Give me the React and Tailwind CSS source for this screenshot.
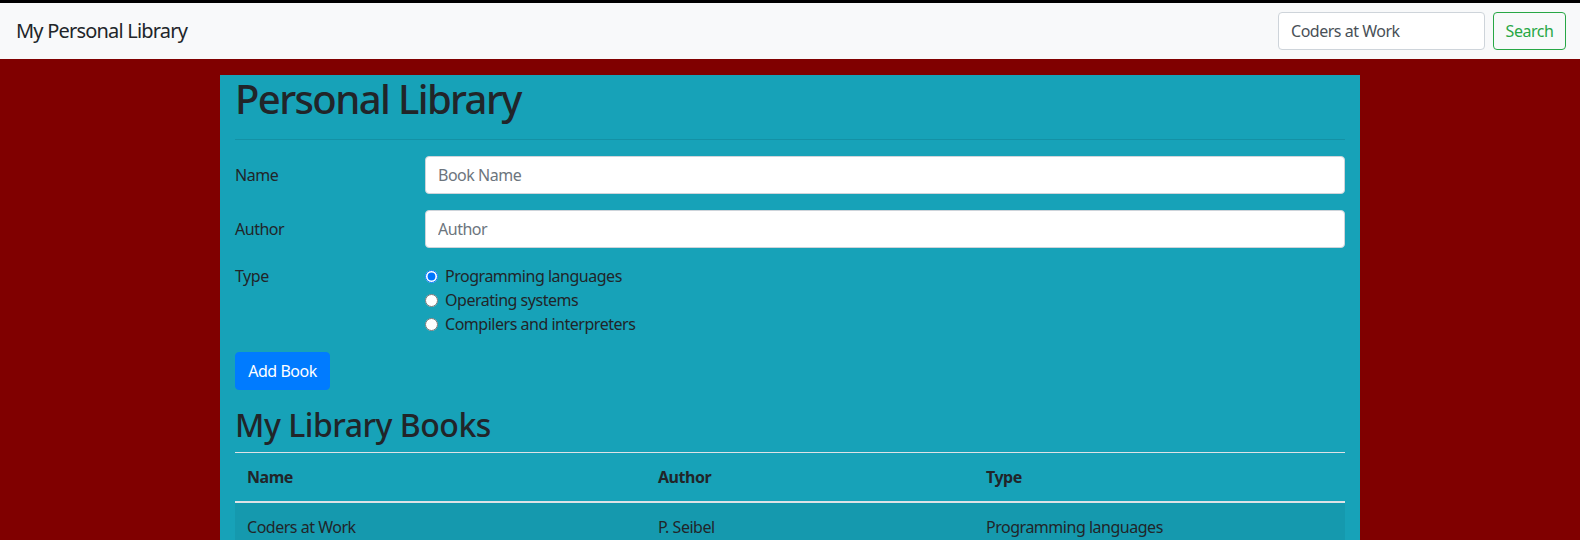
export default function App() {
  return (
    <div className="min-h-[540px] bg-[#800000] text-[#212529] font-['Noto_Sans',sans-serif] tracking-[-0.03em]">
      <div className="h-[3px] bg-black" />
      <nav className="h-[56px] bg-[#f8f9fa] flex items-center justify-between pl-4 pr-[14px]">
        <span className="text-[20px] leading-[30px] text-[#212529] tracking-[-0.04em]">My Personal Library</span>
        <div className="flex items-center gap-2">
          <input
            className="w-[207px] h-[38px] px-3 border border-[#ced4da] rounded bg-white text-[16px] text-[#495057] outline-none tracking-[-0.03em]"
            defaultValue="Coders at Work"
          />
          <button className="h-[38px] w-[73px] border border-[#28a745] rounded text-[#28a745] text-[16px]">
            Search
          </button>
        </div>
      </nav>
      <div className="w-[1140px] mx-auto mt-4 bg-[#17a2b8] px-[15px]">
        <h1 className="text-[40px] leading-[48px] font-medium tracking-[-0.04em]">Personal Library</h1>
        <div className="mt-4 mb-4 border-t border-black/10" />
        <div className="flex items-center mb-4">
          <label className="w-[190px] text-[16px] leading-6">Name</label>
          <input
            className="flex-1 h-[38px] px-3 bg-white border border-[#ced4da] rounded text-[16px] placeholder:text-[#6c757d] outline-none tracking-[-0.03em]"
            placeholder="Book Name"
          />
        </div>
        <div className="flex items-center mb-4">
          <label className="w-[190px] text-[16px] leading-6">Author</label>
          <input
            className="flex-1 h-[38px] px-3 bg-white border border-[#ced4da] rounded text-[16px] placeholder:text-[#6c757d] outline-none tracking-[-0.03em]"
            placeholder="Author"
          />
        </div>
        <div className="flex mb-4">
          <div className="w-[190px] text-[16px] leading-6">Type</div>
          <div className="flex flex-col">
            {["Programming languages", "Operating systems", "Compilers and interpreters"].map((t, i) => (
              <label key={t} className="flex items-center h-6 text-[16px]">
                <input type="radio" name="type" defaultChecked={i === 0} className="m-0 mr-[7px] w-[13px] h-[13px] mt-[1px]" />
                <span>{t}</span>
              </label>
            ))}
          </div>
        </div>
        <button className="h-[38px] w-[95px] bg-[#007bff] text-white rounded text-[16px] border border-[#007bff]">
          Add Book
        </button>
        <h2 className="mt-4 mb-2 text-[32px] leading-[38px] font-medium">My Library Books</h2>
        <table className="w-full border-collapse text-[16px]">
          <thead>
            <tr className="border-t border-[#dee2e6] border-b-2">
              <th className="w-[411px] text-left font-bold p-3 leading-6">Name</th>
              <th className="w-[328px] text-left font-bold p-3 leading-6">Author</th>
              <th className="text-left font-bold p-3 leading-6">Type</th>
            </tr>
          </thead>
          <tbody>
            <tr className="bg-black/5">
              <td className="p-3 leading-6">Coders at Work</td>
              <td className="p-3 leading-6">P. Seibel</td>
              <td className="p-3 leading-6">Programming languages</td>
            </tr>
          </tbody>
        </table>
      </div>
    </div>
  );
}
